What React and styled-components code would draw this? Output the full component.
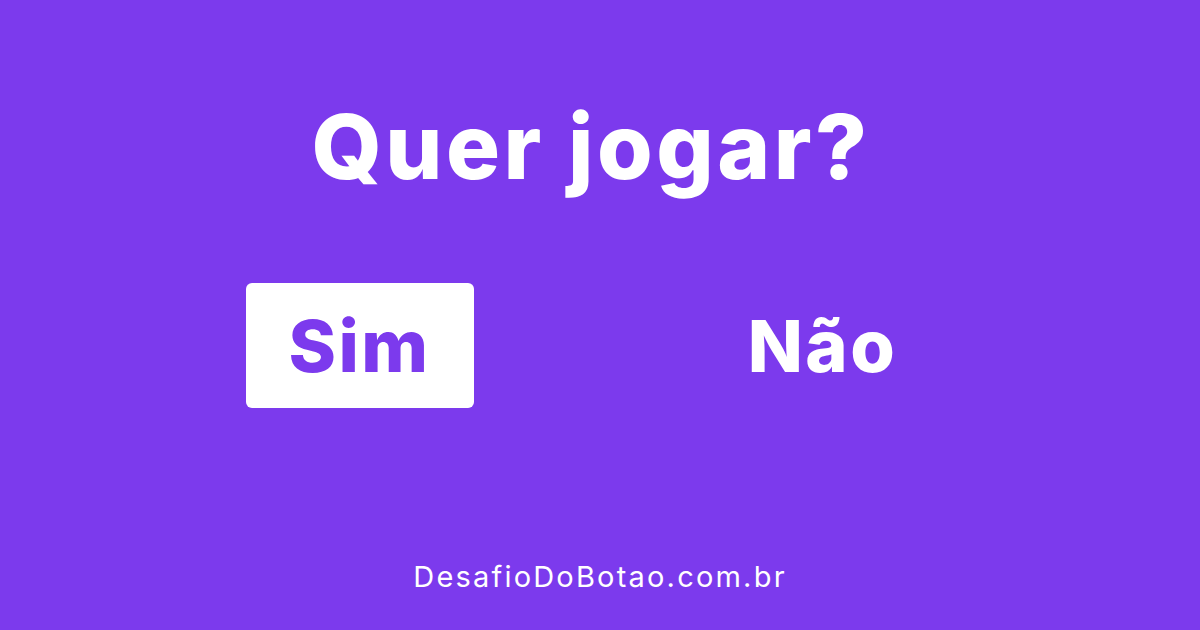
import React from "react";
import styled, { createGlobalStyle } from "styled-components";

const Global = createGlobalStyle`
  html, body { margin: 0; padding: 0; background: #7c3aed; }
  body { font-family: Inter, "Noto Sans", sans-serif; }
`;

const Page = styled.main`
  width: 1200px;
  height: 630px;
  background: #7c3aed;
  display: flex;
  flex-direction: column;
  align-items: center;
  box-sizing: border-box;
`;

const Title = styled.h1`
  margin: 92px 0 0 -18px;
  font-family: Inter, sans-serif;
  font-weight: 800;
  font-size: 90px;
  line-height: 110px;
  color: #fff;
  letter-spacing: 3.5px;
`;

const Choices = styled.div`
  margin: 81px 0 0 -18px;
  display: grid;
  grid-template-columns: 228px 228px;
  column-gap: 235px;
`;

const Choice = styled.button`
  height: 125px;
  border: none;
  border-radius: 6px;
  background: ${(p) => (p.$primary ? "#fff" : "transparent")};
  color: ${(p) => (p.$primary ? "#7c3aed" : "#fff")};
  font-family: Inter, sans-serif;
  font-weight: 800;
  font-size: 72px;
  letter-spacing: 2.5px;
  padding: 0;
  cursor: pointer;
`;

const Footer = styled.footer`
  margin-top: auto;
  margin-bottom: 36px;
  font-family: Inter, sans-serif;
  font-weight: 400;
  font-size: 29px;
  letter-spacing: 2.2px;
  color: #fff;
`;

export default function App() {
  return (
    <>
      <Global />
      <Page>
        <Title>Quer jogar?</Title>
        <Choices>
          <Choice $primary>Sim</Choice>
          <Choice>Não</Choice>
        </Choices>
        <Footer>DesafioDoBotao.com.br</Footer>
      </Page>
    </>
  );
}
